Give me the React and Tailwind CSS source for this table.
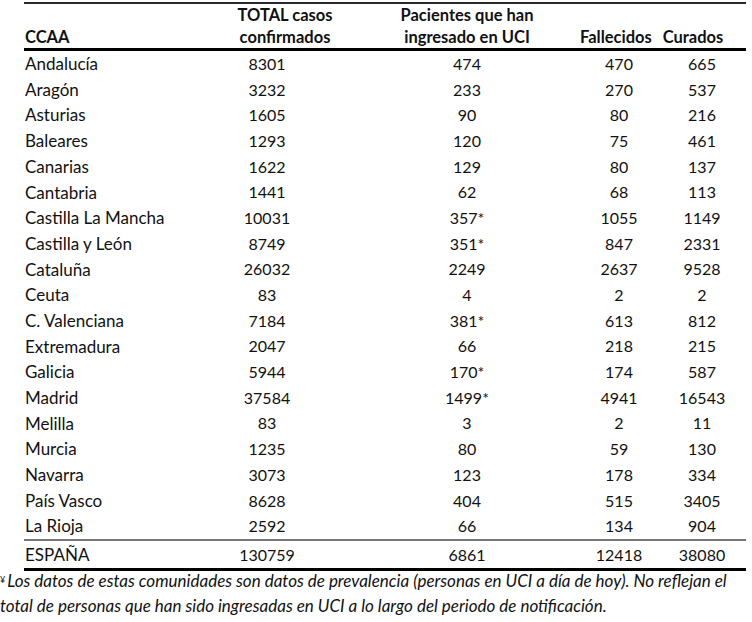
const rows = [
  ["Andalucía", "8301", "474", "470", "665"],
  ["Aragón", "3232", "233", "270", "537"],
  ["Asturias", "1605", "90", "80", "216"],
  ["Baleares", "1293", "120", "75", "461"],
  ["Canarias", "1622", "129", "80", "137"],
  ["Cantabria", "1441", "62", "68", "113"],
  ["Castilla La Mancha", "10031", "357*", "1055", "1149"],
  ["Castilla y León", "8749", "351*", "847", "2331"],
  ["Cataluña", "26032", "2249", "2637", "9528"],
  ["Ceuta", "83", "4", "2", "2"],
  ["C. Valenciana", "7184", "381*", "613", "812"],
  ["Extremadura", "2047", "66", "218", "215"],
  ["Galicia", "5944", "170*", "174", "587"],
  ["Madrid", "37584", "1499*", "4941", "16543"],
  ["Melilla", "83", "3", "2", "11"],
  ["Murcia", "1235", "80", "59", "130"],
  ["Navarra", "3073", "123", "178", "334"],
  ["País Vasco", "8628", "404", "515", "3405"],
  ["La Rioja", "2592", "66", "134", "904"],
];

const grid = "grid grid-cols-[176px_134px_246px_78px_88px]";

function Row({ cells, className = "" }) {
  const [name, total, uci, dead, cured] = cells;
  return (
    <div className={`${grid} h-[25.7px] items-center ${className}`}>
      <span className="pl-[1px] text-[17px]">{name}</span>
      <span className="text-center">{total}</span>
      <span className="text-center pl-[20px]">{uci}</span>
      <span className="text-center">{dead}</span>
      <span className="text-center">{cured}</span>
    </div>
  );
}

export default function App() {
  return (
    <div className="w-[752px] h-[622px] overflow-hidden bg-white text-[#111] font-['Lato',sans-serif] text-[16px]">
      <div className="w-[722px] ml-[24px] pt-[2px]">
        <div className={`${grid} border-t-2 border-[#2a2a2a] border-b-[3px] border-b-black h-[49px] items-end pb-[1px] font-bold text-[16.5px] leading-[22px]`}>
          <span className="pl-[1px]">CCAA</span>
          <span className="pl-[36px] text-center">
            TOTAL casos
            <br />
            confirmados
          </span>
          <span className="text-center pl-[20px]">
            Pacientes que han
            <br />
            ingresado en UCI
          </span>
          <span className="text-center pr-[8px]">Fallecidos</span>
          <span className="text-center pr-[18px]">Curados</span>
        </div>

        {rows.map((r) => (
          <Row key={r[0]} cells={r} />
        ))}

        <div className="border-t-2 border-[#777]">
          <Row cells={["ESPAÑA", "130759", "6861", "12418", "38080"]} className="h-[27px]" />
        </div>
        <div className="h-[3px] bg-black" />
      </div>

      <p className="italic text-[17px] leading-[25px] whitespace-nowrap -mt-[3px]">
        <sup className="text-[9px] pr-[2px] not-italic">¥</sup>Los datos de estas comunidades son datos de prevalencia (personas en UCI a día de hoy). No reflejan el
        <br />
        total de personas que han sido ingresadas en UCI a lo largo del periodo de notificación.
      </p>
    </div>
  );
}
